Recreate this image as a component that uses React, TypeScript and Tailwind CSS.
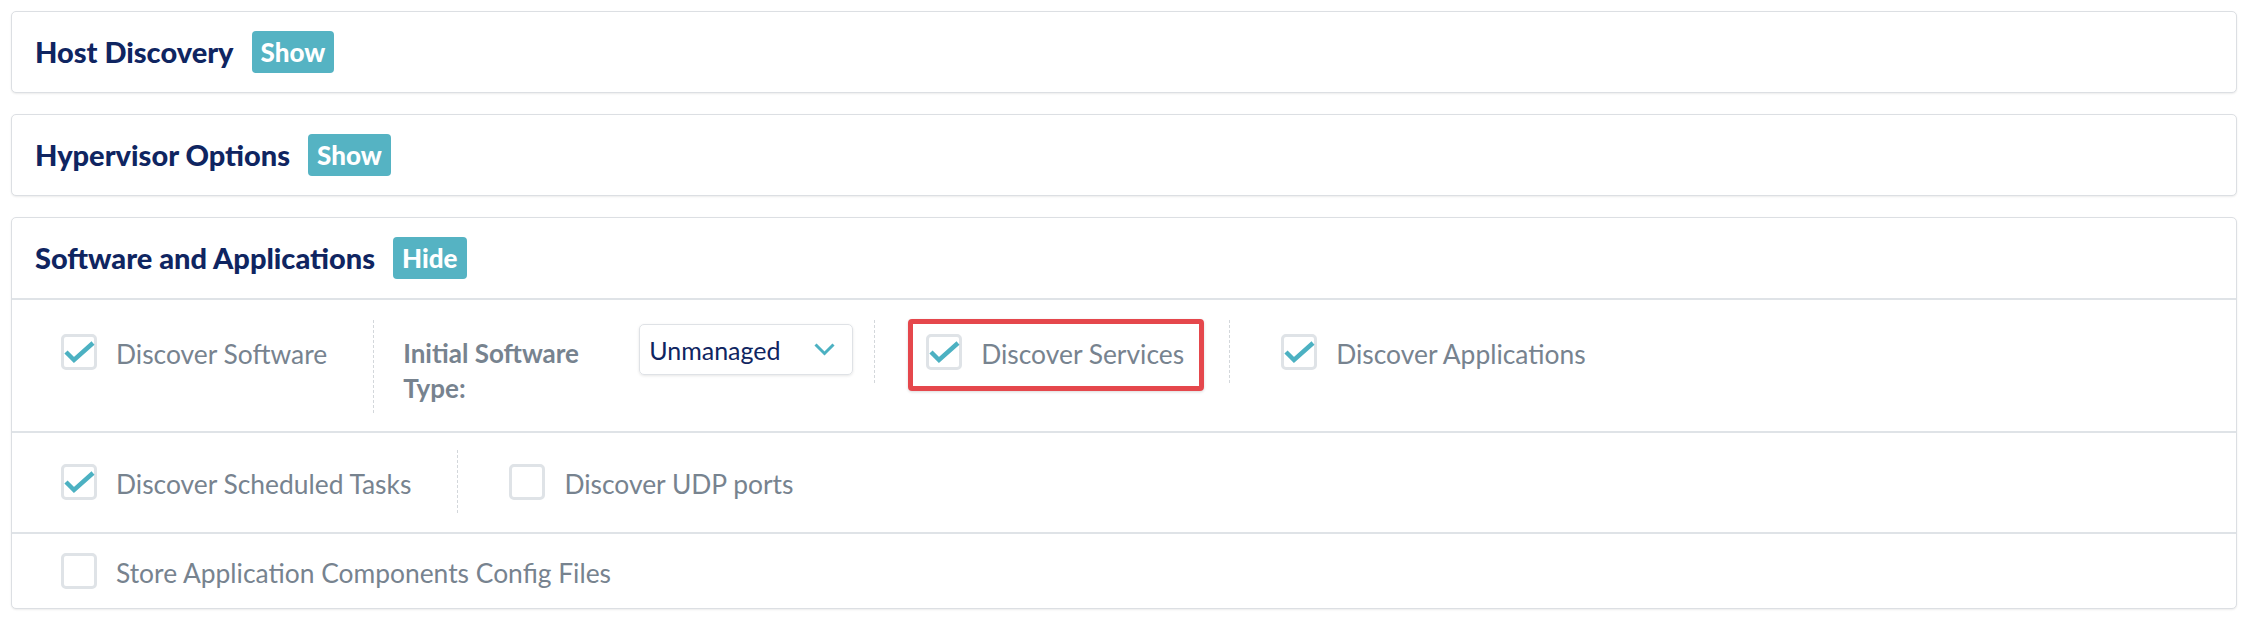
import React from "react";

const titleFont = { fontFamily: "Lato, 'Liberation Sans', sans-serif" };

const Check = ({ checked }: { checked: boolean }) => (
  <span className="flex h-[36px] w-[36px] shrink-0 items-center justify-center rounded-[5px] border-[3px] border-[#dfe3e7] bg-white">
    {checked && (
      <svg width="36" height="36" viewBox="0 0 36 36" className="-m-[3px]">
        <polyline
          points="5,18 13,26 32,9"
          fill="none"
          stroke="#4cb1c2"
          strokeWidth="4.5"
          strokeLinecap="butt"
          strokeLinejoin="miter"
        />
      </svg>
    )}
  </span>
);

interface OptionProps {
  label: string;
  checked: boolean;
  first?: boolean;
  children?: React.ReactNode;
}

const Option = ({ label, checked, first, children }: OptionProps) => (
  <div
    className={
      first
        ? "relative flex h-[63px] items-center gap-[19px] pl-[49px] pr-[46px]"
        : "relative flex h-[63px] items-center gap-[19px] border-l border-dashed border-[#d3d7db] pl-[51px] pr-[45px]"
    }
  >
    <Check checked={checked} />
    <span className="pt-[5px] text-[26.4px] leading-none text-[#77838f]">{label}</span>
    {children}
  </div>
);

const Badge = ({ text }: { text: string }) => (
  <span className="flex h-[42px] items-center rounded-[4px] bg-[#55b3c3] px-[9px] text-[26px] font-black text-white">
    {text}
  </span>
);

const Header = ({ title, action }: { title: string; action: string }) => (
  <div className="flex h-[80px] items-center gap-[18px] pl-[23px]">
    <span className="text-[29px] font-black text-[#0f2561]">{title}</span>
    <Badge text={action} />
  </div>
);

const Card = ({ children }: { children: React.ReactNode }) => (
  <div className="rounded-[5px] border border-[#dcdfe3] bg-white shadow-[0_1px_2px_rgba(0,0,0,0.08)]">
    {children}
  </div>
);

export default function App() {
  return (
    <div className="min-h-[620px] bg-white px-[11px] pt-[11px]" style={titleFont}>
      <div className="flex flex-col gap-[21px]">
        <Card>
          <Header title="Host Discovery" action="Show" />
        </Card>
        <Card>
          <Header title="Hypervisor Options" action="Show" />
        </Card>
        <Card>
          <div className="border-b-2 border-[#dfe3e7]">
            <Header title="Software and Applications" action="Hide" />
          </div>

          <div className="flex items-start border-b-2 border-[#dfe3e7] pt-[20px] pb-[18px]">
            <Option label="Discover Software" checked first />
            <div className="flex items-start border-l border-dashed border-[#d3d7db] pl-[29px] pr-[21px]">
              <div className="w-[182px] pt-[16px] pb-[7px] text-[26px] font-bold leading-[35px] text-[#77838f]">
                Initial Software
                <br />
                Type:
              </div>
              <div className="ml-[54px] mt-[4px] flex h-[51px] w-[214px] items-center justify-between rounded-[5px] border border-[#dfe2e6] pl-[9px] pr-[17px] shadow-[0_1px_3px_rgba(0,0,0,0.1)]">
                <span className="pt-[2px] text-[25px] text-[#0f2561]">Unmanaged</span>
                <svg width="21" height="13" viewBox="0 0 21 13">
                  <polyline points="1.5,1.5 10.5,10.5 19.5,1.5" fill="none" stroke="#4cb1c2" strokeWidth="3" />
                </svg>
              </div>
            </div>
            <Option label="Discover Services" checked>
              <div className="pointer-events-none absolute left-[33px] top-[-1px] h-[72px] w-[296px] rounded-[4px] border-[5px] border-[#e5474c] shadow-[0_1px_3px_rgba(0,0,0,0.15)]" />
            </Option>
            <Option label="Discover Applications" checked />
          </div>

          <div className="flex items-start border-b-2 border-[#dfe3e7] pt-[17px] pb-[19px]">
            <Option label="Discover Scheduled Tasks" checked first />
            <Option label="Discover UDP ports" checked={false} />
          </div>

          <div className="flex items-start pt-[5px] pb-[6px]">
            <Option label="Store Application Components Config Files" checked={false} first />
          </div>
        </Card>
      </div>
    </div>
  );
}
